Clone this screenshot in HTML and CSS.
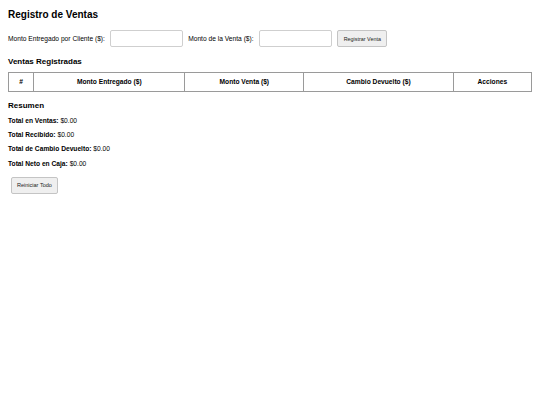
FILE: index.html
```html
<!DOCTYPE html>
<html lang="es">
<head>
<meta charset="utf-8">
<title>Registro de Ventas</title>
<link rel="stylesheet" href="styles.css">
</head>
<body>
<div class="page">
  <h1 class="title">Registro de Ventas</h1>
  <div class="form-row">
    <label class="lbl lbl-first" for="entregado">Monto Entregado por Cliente ($):</label>
    <input class="field field-first" id="entregado" type="number">
    <label class="lbl" for="venta">Monto de la Venta ($):</label>
    <input class="field" id="venta" type="number">
    <button class="btn btn-register" type="button">Registrar Venta</button>
  </div>
  <h2 class="section">Ventas Registradas</h2>
  <table class="sales">
    <thead>
      <tr>
        <th class="col-num">#</th>
        <th class="col-given">Monto Entregado ($)</th>
        <th class="col-sale">Monto Venta ($)</th>
        <th class="col-change">Cambio Devuelto ($)</th>
        <th class="col-actions">Acciones</th>
      </tr>
    </thead>
    <tbody></tbody>
  </table>
  <h2 class="section section-summary">Resumen</h2>
  <div class="summary">
    <p class="sum-line"><strong>Total en Ventas:</strong> $0.00</p>
    <p class="sum-line"><strong>Total Recibido:</strong> $0.00</p>
    <p class="sum-line"><strong>Total de Cambio Devuelto:</strong> $0.00</p>
    <p class="sum-line"><strong>Total Neto en Caja:</strong> $0.00</p>
  </div>
  <button class="btn btn-reset" type="button">Reiniciar Todo</button>
</div>
</body>
</html>
```

FILE: styles.css
```css
html, body {
  margin: 0;
  padding: 0;
  background: #ffffff;
}

body {
  font-family: "Liberation Sans", Arial, sans-serif;
  color: #000000;
  font-size: 6.67px;
}

.page {
  padding: 9px 8px 8px 8px;
}

.title {
  margin: 0;
  font-size: 10px;
  line-height: 11.5px;
  font-weight: bold;
}

.form-row {
  display: flex;
  align-items: center;
  margin-top: 9.5px;
  height: 17px;
}

.lbl {
  font-size: 6.67px;
  line-height: 7.67px;
  margin-right: 5.2px;
}

.field {
  box-sizing: border-box;
  width: 73px;
  height: 16.7px;
  margin: 0 5.6px 0 0;
  padding: 0 2px;
  border: 1px solid #cfcfcf;
  border-radius: 2px;
  background: #ffffff;
  font-family: "Liberation Sans", Arial, sans-serif;
  font-size: 6.67px;
}

.field-first {
  margin-right: 5px;
}

.btn {
  box-sizing: border-box;
  height: 16.6px;
  padding: 0 5.3px;
  border: 1px solid #c4c4c4;
  border-radius: 2px;
  background: #efefef;
  color: #222222;
  font-family: "Liberation Sans", Arial, sans-serif;
  font-size: 5.4px;
  line-height: 6px;
}

.btn-register {
  margin-left: 0;
}

.section {
  margin: 9.9px 0 0 0;
  font-size: 8px;
  line-height: 9.2px;
  font-weight: bold;
}

.sales {
  width: 100%;
  margin-top: 6px;
  border-collapse: collapse;
  table-layout: fixed;
}

.sales th {
  box-sizing: border-box;
  border: 1px solid #9a9a9a;
  padding: 4.9px 4px;
  font-size: 6.67px;
  line-height: 7.67px;
  font-weight: bold;
  text-align: center;
  background: #ffffff;
}

.col-num { width: 25.3px; }
.col-given { width: 151px; }
.col-sale { width: 119px; }
.col-change { width: 149.4px; }

.section-summary {
  margin-top: 9.4px;
}

.summary {
  margin-top: 6.5px;
}

.sum-line {
  margin: 0 0 6.63px 0;
  font-size: 6.67px;
  line-height: 7.67px;
}

.sum-line:last-child {
  margin-bottom: 0;
}

.btn-reset {
  margin: 9.8px 0 0 2.7px;
  height: 16.5px;
  padding: 0 5.2px;
  font-size: 5.55px;
}
```
